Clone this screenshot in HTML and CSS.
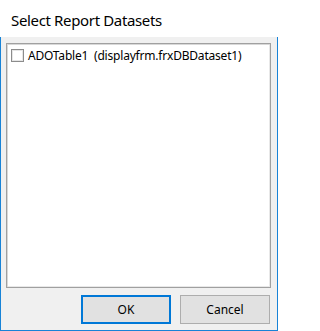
FILE: index.html
```html
<!DOCTYPE html>
<html>
<head>
<meta charset="utf-8">
<link rel="stylesheet" href="styles.css">
</head>
<body>
<div class="window">
  <div class="titlebar"><span class="title">Select Report Datasets</span></div>
  <div class="client">
    <div class="listbox">
      <div class="item">
        <span class="check"></span>
        <span class="label">ADOTable1&nbsp;&nbsp;(displayfrm.frxDBDataset1)</span>
      </div>
    </div>
    <div class="buttons">
      <button class="btn default">OK</button>
      <button class="btn">Cancel</button>
    </div>
  </div>
</div>
</body>
</html>
```
FILE: styles.css
```css
html, body {
  margin: 0;
  padding: 0;
  background: #ffffff;
}
.window {
  width: 278px;
  height: 331px;
  display: flex;
  flex-direction: column;
  font-family: "Noto Sans", "Liberation Sans", sans-serif;
  color: #000;
}
.titlebar {
  height: 37px;
  background: #ffffff;
  display: flex;
  align-items: center;
  padding-left: 11px;
  box-sizing: border-box;
}
.title {
  font-size: 15px;
  letter-spacing: -0.35px;
  color: #000;
  margin-top: 3px;
}
.client {
  flex: 1;
  background: #f0f0f0;
  border: 1px solid #1883d7;
  border-top: none;
  display: flex;
  flex-direction: column;
  padding: 6px 6px 6px 5px;
}
.listbox {
  height: 245px;
  background: #ffffff;
  border: 1px solid #a0a0a0;
  box-shadow: inset 1px 1px 0 #d8d8d8, inset -1px -1px 0 #e8e8e8;
  box-sizing: border-box;
  padding: 4px 0 0 4px;
}
.item {
  display: flex;
  align-items: center;
  height: 15px;
}
.check {
  width: 13px;
  height: 13px;
  box-sizing: border-box;
  border: 1px solid #8c8c8c;
  box-shadow: inset 0 0 0 1px #e6e6e6;
  background: #fff;
  flex: none;
}
.label {
  font-size: 12px;
  letter-spacing: -0.2px;
  margin-left: 4px;
  white-space: nowrap;
}
.buttons {
  display: flex;
  justify-content: flex-end;
  gap: 9px;
  margin-top: 7px;
  padding-right: 1px;
}
.btn {
  width: 90px;
  height: 29px;
  box-sizing: border-box;
  background: #e1e1e1;
  border: 1px solid #adadad;
  font-family: "Noto Sans", "Liberation Sans", sans-serif;
  font-size: 12px;
  color: #000;
  padding: 0;
  margin: 0;
}
.btn.default {
  border: 2px solid #0078d7;
}
```
